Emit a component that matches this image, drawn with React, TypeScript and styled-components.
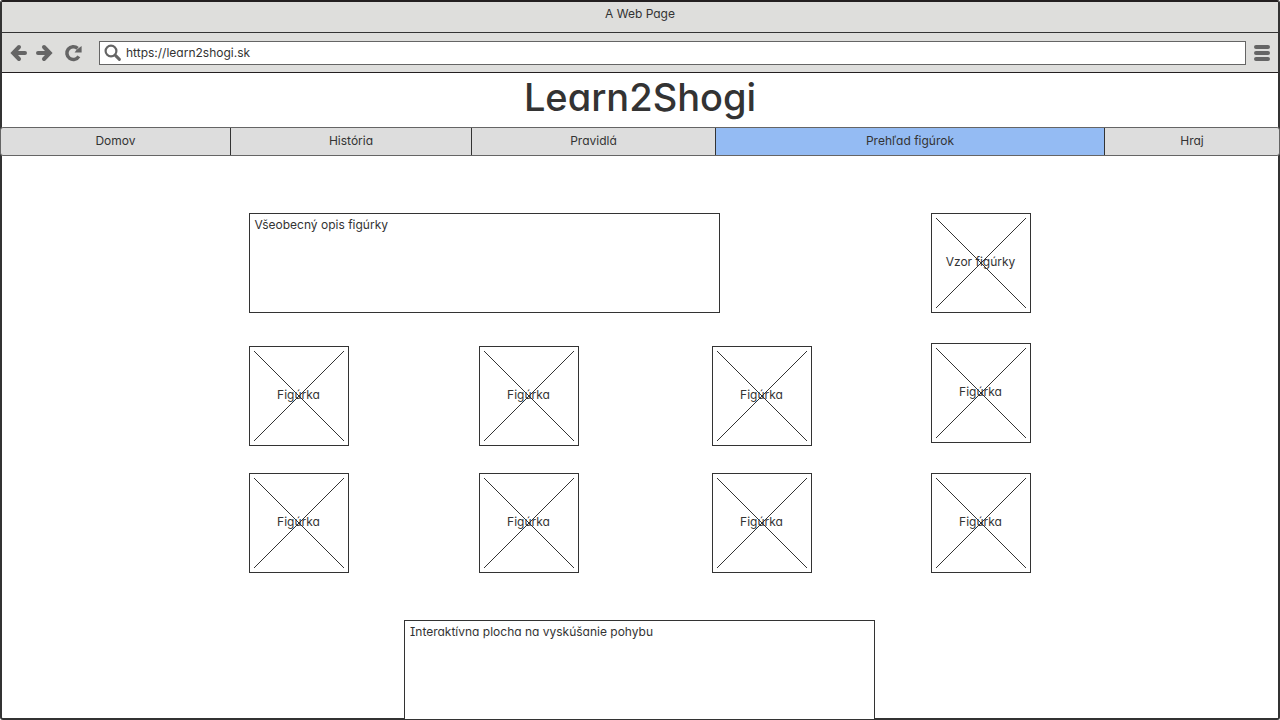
import React from "react";
import styled, { createGlobalStyle } from "styled-components";

const ink = "#333333";
const edge = "#656565";
const chrome = "#dededc";

const GlobalStyle = createGlobalStyle`
  *, *::before, *::after { box-sizing: border-box; }
  body {
    margin: 0;
    background: #fff;
    color: ${ink};
    font-family: Inter, "Liberation Sans", sans-serif;
    font-size: 12px;
    line-height: 16px;
    font-feature-settings: "cv11", "cv08";
  }
`;

const BrowserWindow = styled.div`
  display: flex;
  flex-direction: column;
  min-height: 100vh;
  border: 2px solid ${ink};
  border-top-color: #231f20;
  border-radius: 3px;
`;

const TitleBar = styled.div`
  height: 31px;
  padding-top: 4px;
  border-bottom: 1px solid ${ink};
  background: ${chrome};
  text-align: center;
`;

const Toolbar = styled.div`
  display: flex;
  align-items: center;
  height: 40px;
  padding: 0 8px;
  border-bottom: 1px solid #231f20;
  background: ${chrome};
`;

const ToolButton = styled.button<{ $gap: number }>`
  display: flex;
  margin: 0 ${(p) => p.$gap}px 0 0;
  padding: 0;
  border: 0;
  background: none;
  color: ${edge};
`;

const AddressBar = styled.label`
  display: flex;
  flex: 1;
  align-items: center;
  gap: 4px;
  height: 24px;
  margin-right: 8px;
  padding-left: 4px;
  border: 1px solid ${edge};
  background: #fff;
  color: ${edge};
`;

const AddressInput = styled.input`
  flex: 1;
  min-width: 0;
  padding: 1px 0 0;
  border: 0;
  outline: 0;
  background: none;
  color: ${ink};
  font: inherit;
  font-feature-settings: inherit;
`;

const Title = styled.h1`
  margin: 0;
  padding: 0 0 6px;
  font-size: 38px;
  font-weight: 500;
  line-height: 48px;
  text-align: center;
`;

const Nav = styled.nav`
  display: grid;
  grid-template-columns: 230fr 241fr 244fr 389fr 174fr;
  margin: 0 -2px;
  border: 1px solid ${edge};
  border-radius: 3px;
  background: #dddddd;
`;

const Tab = styled.a<{ $active?: boolean }>`
  padding: 5px 0 6px;
  border-right: 1px solid ${ink};
  background: ${(p) => (p.$active ? "#94bbf3" : "transparent")};
  color: inherit;
  text-align: center;
  text-decoration: none;

  &:last-child { border-right: 0; }
`;

const Content = styled.main`
  display: flex;
  flex: 1;
  flex-direction: column;
  align-items: center;
  padding: 57px 1px 0 0;
`;

const Overview = styled.div`
  display: flex;
  gap: 119px;
  width: 100%;
  max-width: 782px;
  margin-bottom: 47px;
`;

const Details = styled.div`
  flex: 1;
`;

const TextPanel = styled.section`
  width: 100%;
  max-width: 471px;
  height: 100px;
  padding: 3px 5px;
  border: 1px solid ${ink};
  background: #fff;
`;

const PlayPanel = styled(TextPanel)`
  margin-bottom: -2px;
`;

const PieceGrid = styled.div`
  display: grid;
  grid-template-columns: 230fr 233fr 100px;
  row-gap: 27px;
  margin-top: 33px;
`;

const PieceColumn = styled.div`
  display: flex;
  flex-direction: column;
  gap: 30px;
`;

const PieceFrame = styled.figure`
  display: grid;
  width: 100px;
  height: 100px;
  margin: 0;
  border: 1px solid ${ink};
  background: #fff;

  > * { grid-area: 1 / 1; }
`;

const Caption = styled.figcaption`
  align-self: center;
  padding-bottom: 2px;
  text-align: center;
`;

function Piece({ label = "Figúrka" }: { label?: string }) {
  return (
    <PieceFrame>
      <svg width="98" height="98" viewBox="0 0 98 98" stroke={ink} shapeRendering="crispEdges" aria-hidden="true">
        <path d="M4 4L94 94M94 4L4 94" />
      </svg>
      <Caption>{label}</Caption>
    </PieceFrame>
  );
}

const stroke = { fill: "none", stroke: "currentColor", strokeWidth: 4, strokeLinecap: "round" as const };

const tabs = ["Domov", "História", "Pravidlá", "Prehľad figúrok", "Hraj"];

export default function App() {
  return (
    <>
      <GlobalStyle />
      <BrowserWindow>
        <TitleBar>A Web Page</TitleBar>
        <Toolbar>
          <ToolButton $gap={7} aria-label="Back">
            <svg width="18" height="18" viewBox="0 0 18 18" {...stroke}>
              <path d="M3.5 9H15M9 3L3.2 9L9 15" />
            </svg>
          </ToolButton>
          <ToolButton $gap={11} aria-label="Forward">
            <svg width="18" height="18" viewBox="0 0 18 18" {...stroke}>
              <path d="M3 9H14.5M9 3L14.8 9L9 15" />
            </svg>
          </ToolButton>
          <ToolButton $gap={17} aria-label="Reload">
            <svg width="18" height="18" viewBox="0 0 18 18">
              <path d="M14.8 12.4A6.4 6.4 0 1 1 13.6 4.4" fill="none" stroke="currentColor" strokeWidth="3.5" />
              <path d="M17.6 2V8.6H10.6L12.6 5.8Z" fill="currentColor" />
            </svg>
          </ToolButton>
          <AddressBar>
            <svg width="18" height="18" viewBox="0 0 18 18" fill="none" stroke="currentColor" aria-hidden="true">
              <circle cx="7" cy="7" r="5.4" strokeWidth="2.2" />
              <path d="M11.4 11.4L15.4 15.4" strokeWidth="3" strokeLinecap="round" />
            </svg>
            <AddressInput type="text" aria-label="Address" defaultValue="https://learn2shogi.sk" />
          </AddressBar>
          <ToolButton $gap={0} aria-label="Menu">
            <svg width="16" height="18" viewBox="0 0 16 18" {...stroke}>
              <path d="M2 3H14M2 9H14M2 15H14" />
            </svg>
          </ToolButton>
        </Toolbar>
        <Title>Learn2Shogi</Title>
        <Nav>
          {tabs.map((tab) => (
            <Tab key={tab} href="#" $active={tab === "Prehľad figúrok"}>
              {tab}
            </Tab>
          ))}
        </Nav>
        <Content>
          <Overview>
            <Details>
              <TextPanel>Všeobecný opis figúrky</TextPanel>
              <PieceGrid>
                {[0, 1, 2, 3, 4, 5].map((n) => (
                  <Piece key={n} />
                ))}
              </PieceGrid>
            </Details>
            <PieceColumn>
              <Piece label="Vzor figúrky" />
              <Piece />
              <Piece />
            </PieceColumn>
          </Overview>
          <PlayPanel>Interaktívna plocha na vyskúšanie pohybu</PlayPanel>
        </Content>
      </BrowserWindow>
    </>
  );
}
